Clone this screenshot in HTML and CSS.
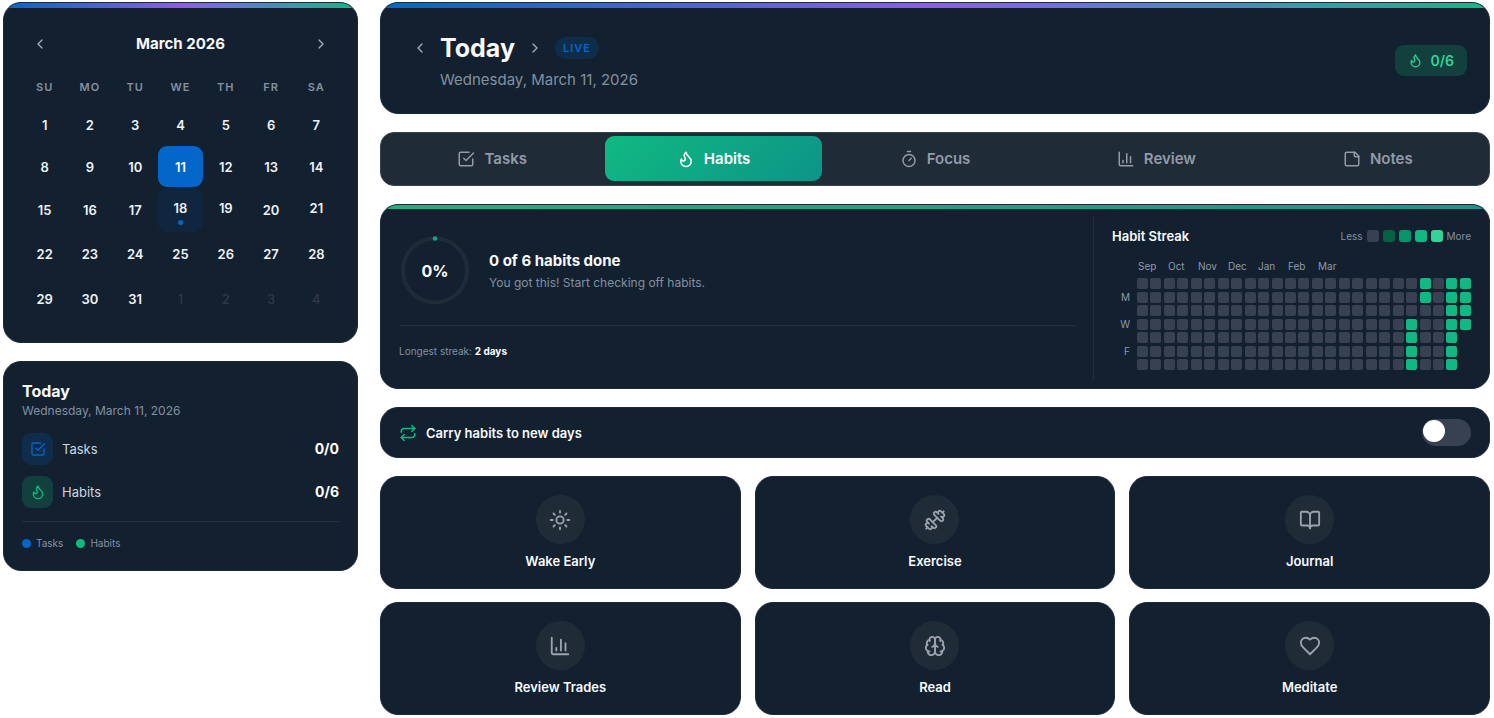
FILE: index.html
```html
<!DOCTYPE html>
<html lang="en">
<head>
<meta charset="utf-8">
<meta name="viewport" content="width=device-width, initial-scale=1">
<title>Habits</title>
<link rel="stylesheet" href="styles.css">
<script src="app.js" defer></script>
</head>
<body>
<svg class="sprite" aria-hidden="true">
  <symbol id="left" viewBox="0 0 24 24"><path d="m15 18-6-6 6-6"/></symbol>
  <symbol id="right" viewBox="0 0 24 24"><path d="m9 18 6-6-6-6"/></symbol>
  <symbol id="check" viewBox="0 0 24 24"><path d="m9 11 3 3L22 4"/><path d="M21 12v7a2 2 0 0 1-2 2H5a2 2 0 0 1-2-2V5a2 2 0 0 1 2-2h11"/></symbol>
  <symbol id="flame" viewBox="0 0 24 24"><path d="M8.5 14.5A2.5 2.5 0 0 0 11 12c0-1.38-.5-2-1-3-1.072-2.143-.224-4.054 2-6 .5 2.5 2 4.9 4 6.5 2 1.6 3 3.5 3 5.5a7 7 0 1 1-14 0c0-1.153.433-2.294 1-3a2.5 2.5 0 0 0 2.5 2.5z"/></symbol>
  <symbol id="timer" viewBox="0 0 24 24"><path d="M10 2h4M12 14l3-3"/><circle cx="12" cy="14" r="8"/></symbol>
  <symbol id="chart" viewBox="0 0 24 24"><path d="M3 3v16a2 2 0 0 0 2 2h16M18 17V9M13 17V5M8 17v-3"/></symbol>
  <symbol id="note" viewBox="0 0 24 24"><path d="M16 3H5a2 2 0 0 0-2 2v14a2 2 0 0 0 2 2h14a2 2 0 0 0 2-2V8Z"/><path d="M15 3v4a2 2 0 0 0 2 2h4"/></symbol>
  <symbol id="repeat" viewBox="0 0 24 24"><path d="m17 2 4 4-4 4"/><path d="M3 11v-1a4 4 0 0 1 4-4h14"/><path d="m7 22-4-4 4-4"/><path d="M21 13v1a4 4 0 0 1-4 4H3"/></symbol>
  <symbol id="sun" viewBox="0 0 24 24"><circle cx="12" cy="12" r="4"/><path d="M12 2v2M12 20v2M4.93 4.93l1.41 1.41M17.66 17.66l1.41 1.41M2 12h2M20 12h2M6.34 17.66l-1.41 1.41M19.07 4.93l-1.41 1.41"/></symbol>
  <symbol id="dumbbell" viewBox="0 0 24 24"><path d="M17.596 12.768a2 2 0 1 0 2.829-2.829l-1.768-1.767a2 2 0 0 0 2.828-2.829l-2.828-2.828a2 2 0 0 0-2.829 2.828l-1.767-1.768a2 2 0 1 0-2.829 2.829z"/><path d="m2.5 21.5 1.4-1.4M20.1 3.9l1.4-1.4M9.6 14.4l4.8-4.8"/><path d="M5.343 21.485a2 2 0 1 0 2.829-2.828l1.767 1.768a2 2 0 1 0 2.829-2.829l-6.364-6.364a2 2 0 1 0-2.829 2.829l1.768 1.767a2 2 0 0 0-2.828 2.829z"/></symbol>
  <symbol id="book" viewBox="0 0 24 24"><path d="M12 7v14"/><path d="M3 18a1 1 0 0 1-1-1V4a1 1 0 0 1 1-1h5a4 4 0 0 1 4 4 4 4 0 0 1 4-4h5a1 1 0 0 1 1 1v13a1 1 0 0 1-1 1h-6a3 3 0 0 0-3 3 3 3 0 0 0-3-3z"/></symbol>
  <symbol id="brain" viewBox="0 0 24 24"><path d="M12 5a3 3 0 1 0-5.997.125 4 4 0 0 0-2.526 5.77 4 4 0 0 0 .556 6.588A4 4 0 1 0 12 18Z"/><path d="M12 5a3 3 0 1 1 5.997.125 4 4 0 0 1 2.526 5.77 4 4 0 0 1-.556 6.588A4 4 0 1 1 12 18Z"/><path d="M15 13a4.5 4.5 0 0 1-3-4 4.5 4.5 0 0 1-3 4"/><path d="M17.599 6.5a3 3 0 0 0 .399-1.375M6.003 5.125A3 3 0 0 0 6.401 6.5M3.477 10.896a4 4 0 0 1 .585-.396M19.938 10.5a4 4 0 0 1 .585.396M6 18a4 4 0 0 1-1.967-.516M19.967 17.484A4 4 0 0 1 18 18"/></symbol>
  <symbol id="heart" viewBox="0 0 24 24"><path d="M19 14c1.49-1.46 3-3.21 3-5.5A5.5 5.5 0 0 0 16.5 3c-1.76 0-3 .5-4.5 2-1.5-1.5-2.74-2-4.5-2A5.5 5.5 0 0 0 2 8.5c0 2.3 1.5 4.05 3 5.5l7 7Z"/></symbol>
</svg>
<div class="layout">
  <aside class="sidebar">
    <section class="card calendar">
      <div class="stripe rainbow"></div>
      <header class="cal-head">
        <button class="nav" aria-label="Previous month"><svg class="icon i16"><use href="#left"/></svg></button>
        <h2 class="cal-title">March 2026</h2>
        <button class="nav" aria-label="Next month"><svg class="icon i16"><use href="#right"/></svg></button>
      </header>
      <div class="weekdays"><span>SU</span><span>MO</span><span>TU</span><span>WE</span><span>TH</span><span>FR</span><span>SA</span></div>
      <div class="days" id="days"></div>
    </section>
    <section class="card summary">
      <h2 class="summary-title">Today</h2>
      <p class="summary-date">Wednesday, March 11, 2026</p>
      <div class="stat"><span class="tile blue"><svg class="icon i16"><use href="#check"/></svg></span><span>Tasks</span><strong>0/0</strong></div>
      <div class="stat"><span class="tile green"><svg class="icon i16"><use href="#flame"/></svg></span><span>Habits</span><strong>0/6</strong></div>
      <div class="legend"><span class="dot dot-blue"></span><span>Tasks</span><span class="dot dot-green"></span><span>Habits</span></div>
    </section>
  </aside>
  <main class="main">
    <header class="card hero">
      <div class="stripe rainbow"></div>
      <button class="nav" aria-label="Previous day"><svg class="icon i16"><use href="#left"/></svg></button>
      <div class="hero-text">
        <div class="hero-row">
          <h1 class="hero-title">Today</h1>
          <button class="nav" aria-label="Next day"><svg class="icon i16"><use href="#right"/></svg></button>
          <span class="live">LIVE</span>
        </div>
        <p class="hero-date">Wednesday, March 11, 2026</p>
      </div>
      <span class="score"><svg class="icon i14"><use href="#flame"/></svg>0/6</span>
    </header>
    <nav class="tabs">
      <button class="tab"><svg class="icon i18"><use href="#check"/></svg>Tasks</button>
      <button class="tab active"><svg class="icon i18"><use href="#flame"/></svg>Habits</button>
      <button class="tab"><svg class="icon i18"><use href="#timer"/></svg>Focus</button>
      <button class="tab"><svg class="icon i18"><use href="#chart"/></svg>Review</button>
      <button class="tab"><svg class="icon i18"><use href="#note"/></svg>Notes</button>
    </nav>
    <section class="card progress">
      <div class="stripe teal"></div>
      <div class="overview">
        <div class="overview-top">
          <svg class="ring" viewBox="0 0 72 72" role="img" aria-label="0%">
            <circle class="ring-track" cx="36" cy="36" r="32"/>
            <circle class="ring-dot" cx="36" cy="4" r="2.3"/>
            <text class="ring-text" x="36" y="42">0%</text>
          </svg>
          <div class="overview-text">
            <h2 class="done">0 of 6 habits done</h2>
            <p class="cheer">You got this! Start checking off habits.</p>
          </div>
        </div>
        <p class="longest">Longest streak: <strong>2 days</strong></p>
      </div>
      <div class="streak">
        <div class="streak-head">
          <h3 class="streak-title">Habit Streak</h3>
          <div class="scale"><span>Less</span><i class="sw"></i><i class="sw l1"></i><i class="sw l2"></i><i class="sw l3"></i><i class="sw l4"></i><span>More</span></div>
        </div>
        <div class="months"><span>Sep</span><span>Oct</span><span>Nov</span><span>Dec</span><span>Jan</span><span>Feb</span><span>Mar</span></div>
        <div class="heat-row">
          <div class="rows"><span></span><span>M</span><span></span><span>W</span><span></span><span>F</span><span></span></div>
          <div class="heat" id="heat"></div>
        </div>
      </div>
    </section>
    <section class="card carry">
      <svg class="icon i18"><use href="#repeat"/></svg>
      <label for="carry">Carry habits to new days</label>
      <input class="switch" id="carry" type="checkbox" role="switch">
    </section>
    <section class="habits">
      <button class="card habit"><span class="bubble"><svg class="icon i22"><use href="#sun"/></svg></span>Wake Early</button>
      <button class="card habit"><span class="bubble"><svg class="icon i22"><use href="#dumbbell"/></svg></span>Exercise</button>
      <button class="card habit"><span class="bubble"><svg class="icon i22"><use href="#book"/></svg></span>Journal</button>
      <button class="card habit"><span class="bubble"><svg class="icon i22"><use href="#chart"/></svg></span>Review Trades</button>
      <button class="card habit"><span class="bubble"><svg class="icon i22"><use href="#brain"/></svg></span>Read</button>
      <button class="card habit"><span class="bubble"><svg class="icon i22"><use href="#heart"/></svg></span>Meditate</button>
    </section>
  </main>
</div>
</body>
</html>
```
FILE: styles.css
```css
* { box-sizing: border-box; }
body { margin: 0; background: #fff; color: #f8fafc; font-family: Inter, "Liberation Sans", sans-serif; }
h1, h2, h3, p { margin: 0; }
button { margin: 0; padding: 0; border: 0; background: none; color: inherit; font: inherit; cursor: pointer; }
.sprite { position: absolute; width: 0; height: 0; }
.icon { flex: none; fill: none; stroke: currentColor; stroke-width: 2; stroke-linecap: round; stroke-linejoin: round; }
.i14 { width: 15px; height: 15px; }
.i16 { width: 16px; height: 16px; }
.i18 { width: 18px; height: 18px; }
.i22 { width: 22px; height: 22px; }

.layout { display: grid; grid-template-columns: 355px minmax(0, 1fr); gap: 22px; align-items: start; padding: 2px 4px 3px 3px; }
.sidebar, .main { display: flex; flex-direction: column; gap: 18px; }
.card { position: relative; overflow: hidden; background: #132030; border: 1px solid #1d2a3a; border-radius: 18px; }
.stripe { position: absolute; top: 0; left: 0; right: 0; height: 5px; }
.rainbow { background: linear-gradient(90deg, #0466c8, #8b5cf6 50%, #10b981); }
.teal { height: 4px; background: linear-gradient(90deg, #22b07d, #1a9488); }
.nav { display: grid; place-items: center; width: 36px; height: 36px; color: #a3adb9; }

.calendar { padding: 23px 18px 21px; }
.cal-head { display: flex; justify-content: space-between; align-items: center; }
.cal-title { font-size: 15px; line-height: 24px; font-weight: 700; }
.weekdays { display: grid; grid-template-columns: repeat(7, 1fr); padding: 17px 0 9px; text-align: center; font-size: 11px; line-height: 16px; font-weight: 600; letter-spacing: 1px; color: #8491a1; }
.days { display: grid; grid-template-columns: repeat(7, 1fr); grid-template-rows: 41px 41px 44px 42px 45px; row-gap: 1px; }
.day { display: flex; flex-direction: column; align-items: center; justify-content: center; gap: 4px; font-size: 13px; line-height: 18px; font-weight: 600; border-radius: 9px; color: #eef2f7; }
.day.muted { color: #2d3948; font-weight: 500; }
.day.selected { background: #0466c8; color: #fff; }
.day.marked { padding-top: 3px; background: #10263f; gap: 3px; }
.mark { width: 5px; height: 5px; border-radius: 50%; background: #0466c8; }
.mark.off { width: 0; height: 0; }

.summary { padding: 18px 18px 19px; }
.summary-title { font-size: 16px; line-height: 22px; font-weight: 700; }
.summary-date { padding-bottom: 13px; font-size: 12px; line-height: 18px; color: #8290a0; }
.stat { display: flex; align-items: center; gap: 9px; margin-bottom: 11px; font-size: 13px; line-height: 20px; color: #cbd5e1; }
.stat strong { margin-left: auto; color: #fff; font-size: 14px; }
.tile { display: grid; place-items: center; width: 31px; height: 32px; border-radius: 9px; }
.tile.blue { background: #0f2c4b; color: #0466c8; }
.tile.green { background: #12403f; color: #10b981; }
.legend { display: flex; align-items: center; gap: 5px; margin-top: 13px; padding-top: 13px; border-top: 1px solid #243040; font-size: 10px; line-height: 16px; color: #8491a1; }
.dot { width: 9px; height: 9px; border-radius: 50%; }
.dot-blue { background: #0466c8; }
.dot-green { margin-left: 8px; background: #10b981; }

.hero { display: flex; align-items: flex-start; min-height: 112px; padding: 27px 22px 18px 21px; }
.hero-text { padding-left: 2px; }
.hero-row { display: flex; align-items: center; height: 36px; }
.hero-title { font-size: 25px; line-height: 36px; font-weight: 700; }
.hero-row .nav { margin: 0 2px; }
.live { padding: 0 8px; border-radius: 11px; background: #0f2c4b; color: #0466c8; font-size: 11px; line-height: 22px; font-weight: 600; letter-spacing: 1px; }
.hero-date { padding-top: 2px; font-size: 15px; line-height: 24px; color: #8290a0; }
.score { display: flex; align-items: center; gap: 8px; height: 31px; margin: 15px 0 0 auto; padding: 0 13px; border-radius: 9px; background: #12403f; color: #34d399; font-size: 14px; font-weight: 600; }

.tabs { display: grid; grid-template-columns: repeat(5, 1fr); gap: 5px; padding: 3px 3px 4px; background: #1f2b37; border: 1px solid #36434f; border-radius: 14px; }
.tab { display: flex; align-items: center; justify-content: center; gap: 9px; height: 45px; border-radius: 9px; color: #929ba7; font-size: 15px; font-weight: 600; }
.tab.active { color: #fff; background: linear-gradient(135deg, #10b981, #0d9488); }

.progress { display: flex; padding: 11px 18px 8px; }
.overview { flex: 1; padding: 18px 18px 0 0; border-right: 1px solid #1f2c3b; }
.overview-top { display: flex; align-items: center; gap: 18px; padding-bottom: 18px; border-bottom: 1px solid #243040; }
.overview-text { padding-top: 2px; }
.ring { width: 72px; height: 73px; }
.ring-track { fill: none; stroke: #1f2b37; stroke-width: 4; }
.ring-dot { fill: #1d9f8b; }
.ring-text { fill: #fff; font-size: 16px; font-weight: 700; text-anchor: middle; }
.done { font-size: 15px; line-height: 22px; font-weight: 700; }
.cheer { font-size: 12px; line-height: 22px; color: #8290a0; }
.longest { padding: 16px 0 20px; font-size: 10px; line-height: 18px; color: #8290a0; }
.longest strong { color: #fff; }
.streak { width: 377px; padding: 10px 0 9px 18px; }
.streak-head { display: flex; align-items: center; justify-content: space-between; height: 20px; }
.streak-title { font-size: 13px; line-height: 20px; font-weight: 600; }
.scale { display: flex; align-items: center; gap: 4px; font-size: 10px; line-height: 16px; color: #8491a1; }
.sw { width: 12px; height: 12px; border-radius: 3px; background: #374151; }
.sw.l1 { background: #065f46; }
.sw.l2 { background: #059669; }
.sw.l3 { background: #10b981; }
.sw.l4 { background: #34d399; }
.months { display: flex; padding: 12px 0 4px 26px; font-size: 10px; line-height: 16px; color: #8f9aa8; }
.months span { width: 30px; }
.heat-row { display: flex; justify-content: space-between; height: 92px; }
.rows { display: flex; flex-direction: column; justify-content: space-between; width: 18px; font-size: 10px; line-height: 10px; text-align: right; color: #8f9aa8; }
.rows span { height: 11px; }
.heat { display: grid; grid-template: repeat(7, 11px) / repeat(25, 11px); grid-auto-flow: column; justify-content: space-between; align-content: space-between; width: 334px; }
.cell { border-radius: 2px; background: #374151; }
.cell.on { background: #10b981; }

.carry { display: flex; align-items: center; gap: 9px; padding: 11px 18px; font-size: 13px; line-height: 20px; font-weight: 600; }
.carry .icon { color: #10b981; }
.switch { appearance: none; display: flex; width: 49px; height: 27px; margin: 0 0 0 auto; padding: 1px; border-radius: 14px; background: #374151; cursor: pointer; }
.switch::before { content: ""; width: 22px; height: 22px; border-radius: 50%; background: #fff; }
.switch:checked { justify-content: flex-end; background: #10b981; }

.habits { display: grid; grid-template-columns: repeat(3, 1fr); gap: 13px 14px; }
.habit { display: flex; flex-direction: column; align-items: center; gap: 7px; padding: 18px 18px 16px; font-size: 13px; line-height: 21px; font-weight: 600; }
.bubble { display: grid; place-items: center; width: 49px; height: 49px; border-radius: 50%; background: #1f2b37; color: #9ca3af; }
```
FILE: app.js
```js
const days = document.getElementById("days");
for (let i = 1; i <= 35; i++) {
  const muted = i > 31;
  const day = document.createElement("button");
  day.className = "day" + (muted ? " muted" : "") + (i === 11 ? " selected" : "") + (i === 18 ? " marked" : "");
  day.textContent = muted ? i - 31 : i;
  if (i >= 18 && i <= 21 && i !== 20) {
    const mark = document.createElement("span");
    mark.className = i === 18 ? "mark" : "mark off";
    day.append(mark);
  }
  days.append(day);
}

const completed = { 20: [3, 4, 5, 6], 21: [0, 1], 23: [0, 1, 2, 3, 4, 5, 6], 24: [0, 1, 2, 3] };
const heat = document.getElementById("heat");
for (let week = 0; week < 25; week++) {
  for (let d = 0; d < (week === 24 ? 4 : 7); d++) {
    const cell = document.createElement("span");
    cell.className = (completed[week] || []).includes(d) ? "cell on" : "cell";
    heat.append(cell);
  }
}
```
